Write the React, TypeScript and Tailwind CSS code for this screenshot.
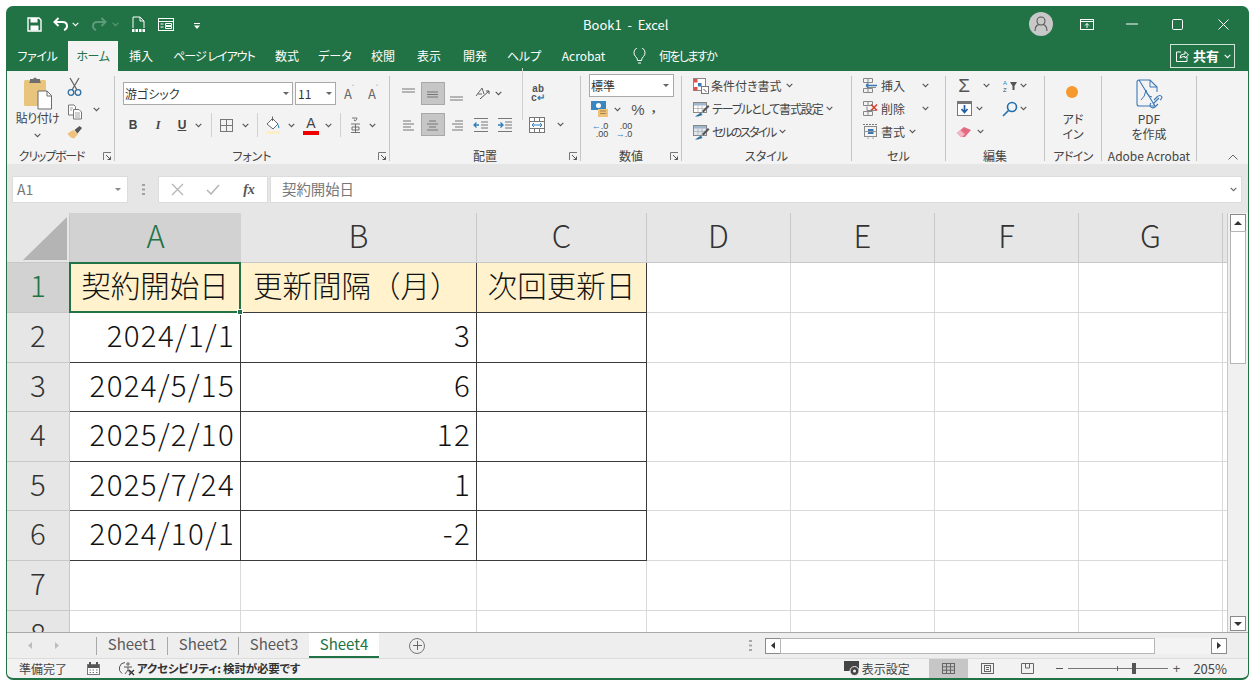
import React from "react";

function Chev({ className = "", color = "#555" }: { className?: string; color?: string }) {
  return (
    <svg width="7" height="5" viewBox="0 0 7 5" className={"shrink-0 " + className}>
      <path d="M0.7 0.8 L3.5 3.6 L6.3 0.8" fill="none" stroke={color} strokeWidth="1.1" />
    </svg>
  );
}

function Launcher({ className = "" }: { className?: string }) {
  return (
    <svg width="9" height="9" viewBox="0 0 9 9" className={"shrink-0 " + className}>
      <path d="M0.5 8V0.5H8" fill="none" stroke="#777" />
      <path d="M3 3L7.5 7.5M7.5 4.5V7.5H4.5" fill="none" stroke="#555" />
    </svg>
  );
}

function Group({ w, label, launcher, children, labelClass = "" }: { w: number; label: string; launcher?: boolean; children: React.ReactNode; labelClass?: string }) {
  return (
    <div className="flex shrink-0 h-full" style={{ width: w }}>
      <div className="flex-1 min-w-0 flex flex-col">
        <div className="h-[76px] shrink-0">{children}</div>
        <div className={"relative h-[14px] mt-[2px] flex items-center justify-center text-[12px] text-[#444] leading-none whitespace-nowrap " + labelClass}>
          {label}
          {launcher && <Launcher className="absolute right-[2px] top-[3px]" />}
        </div>
      </div>
      <div className="w-px bg-[#c4c4c4] mt-[5px] h-[85px] shrink-0" />
    </div>
  );
}

function Lines({ kind }: { kind: string }) {
  const map: Record<string, number[][]> = {
    vtop: [[1, 3, 14], [1, 6, 14]],
    vmid: [[2, 6, 13], [2, 8.5, 13], [2, 11, 13]],
    vbot: [[1, 11, 14], [1, 14, 14]],
    left: [[2, 4, 10], [2, 7, 13], [2, 10, 10], [2, 13, 13]],
    center: [[4, 4, 11], [2, 7, 13], [4, 10, 11], [2, 13, 13]],
    right: [[6, 4, 14], [3, 7, 14], [6, 10, 14], [3, 13, 14]],
  };
  return (
    <svg width="16" height="16" viewBox="0 0 16 16">
      {map[kind].map((l, i) => (
        <path key={i} d={`M${l[0]} ${l[1]}H${l[2]}`} stroke="#777" strokeWidth="1" />
      ))}
    </svg>
  );
}

function Paste() {
  return (
    <svg width="30" height="34" viewBox="0 0 30 34">
      <rect x="1" y="3" width="22" height="26" rx="1.5" fill="#e8c47c" />
      <path d="M7 4V2H10Q12-1 14 2H17V4L18 6H6Z" fill="#6f6f6f" />
      <path d="M15 14H24L28.5 18.5V32H15Z" fill="#fff" stroke="#6b6b6b" />
      <path d="M24 14V19H28.5" fill="none" stroke="#6b6b6b" />
    </svg>
  );
}

function Scissors() {
  return (
    <svg width="16" height="20" viewBox="0 0 16 20" fill="none">
      <path d="M3 1L10 13M12 1L5 13" stroke="#666" strokeWidth="1.3" />
      <circle cx="4" cy="15.5" r="2.8" stroke="#2f6f9f" strokeWidth="1.3" />
      <circle cx="11" cy="15.5" r="2.8" stroke="#2f6f9f" strokeWidth="1.3" />
    </svg>
  );
}

function CopyIc() {
  return (
    <svg width="16" height="16" viewBox="0 0 16 16" fill="none">
      <path d="M1.5 1H7L8.5 2.5V11H1.5Z" fill="#fff" stroke="#777" />
      <path d="M6.5 5.5H12L14.5 8V15H6.5Z" fill="#fff" stroke="#777" />
      <path d="M8 9H13M8 11H13M8 13H13M3 4H6M3 6H5" stroke="#8a8a8a" strokeWidth=".8" />
    </svg>
  );
}

function Painter() {
  return (
    <svg width="16" height="15" viewBox="0 0 16 15">
      <path d="M0.5 8.5L6 5L11 9L7 13.5Q3 13 0.5 8.5Z" fill="#eec27a" />
      <path d="M7.5 5L12.5 1L15 3L10.5 8.5Z" fill="#555" />
    </svg>
  );
}

function Borders() {
  return (
    <svg width="15" height="15" viewBox="0 0 15 15" fill="none" stroke="#777">
      <rect x="1.5" y="1.5" width="12" height="12" />
      <path d="M7.5 1.5V13.5M1.5 7.5H13.5" />
    </svg>
  );
}

function Fill() {
  return (
    <svg width="16" height="20" viewBox="0 0 16 20">
      <path d="M2 9L7.5 3.5L13 9L8 14Z" fill="#fff" stroke="#666" />
      <path d="M7.5 1.5V6" stroke="#666" />
      <path d="M13 9Q15 12 14 13.5Q12.5 12 13 9Z" fill="#2f7fb8" />
      <rect x="1" y="16" width="14" height="3" fill="#fbeec8" />
    </svg>
  );
}

function Phonetic() {
  return (
    <svg width="13" height="18" viewBox="0 0 13 18" fill="none" stroke="#666" strokeWidth=".9">
      <path d="M3 2H8Q8 4 6 5M5.5 3.5V5M2 8H11M6.5 8V17M3 11H10V14H3ZM2 16.5H11" />
    </svg>
  );
}

function IconBtn({ children, w, className = "" }: { children: React.ReactNode; w: number; className?: string }) {
  return (
    <div className={"flex items-center justify-center shrink-0 h-full " + className} style={{ width: w }}>
      {children}
    </div>
  );
}

function VSep({ h = 24 }: { h?: number }) {
  return <div className="w-px bg-[#d0d0d0] shrink-0" style={{ height: h }} />;
}

function StyleIcon({ kind }: { kind: number }) {
  if (kind === 0)
    return (
      <svg width="16" height="16" viewBox="0 0 16 16">
        <rect x=".5" y=".5" width="12" height="12" fill="#fff" stroke="#888" />
        <rect x="1" y="1" width="3.5" height="3.5" fill="#d9534f" />
        <rect x="5" y="5" width="3.5" height="3.5" fill="#3a78b5" />
        <rect x="1" y="9" width="3.5" height="3.5" fill="#d9534f" />
        <rect x="8.5" y="8.5" width="7" height="7" fill="#fff" stroke="#777" />
        <path d="M10.5 11L13.5 14" stroke="#555" />
      </svg>
    );
  return (
    <svg width="17" height="16" viewBox="0 0 17 16">
      <rect x=".5" y="1.5" width="13" height="10" fill={kind === 1 ? "#fff" : "#dfe6ee"} stroke="#888" />
      <rect x="1" y="2" width="12" height="2.5" fill="#9fb6cf" />
      <path d="M1 7.5H13M5 4.5V11.5M9 4.5V11.5" stroke="#aaa" strokeWidth=".7" />
      <path d="M9 10L15 4L16.5 5.5L10.5 11.5Z" fill="#555" />
      <path d="M2 15.5L8 11.5L9.5 14L5 15.5Z" fill="#2f6f9f" />
    </svg>
  );
}

function CellIcon({ kind }: { kind: number }) {
  if (kind === 2)
    return (
      <svg width="17" height="17" viewBox="0 0 17 17" fill="none">
        <path d="M1 1.5H16" stroke="#777" strokeDasharray="2 1" />
        <rect x="2.5" y="3.5" width="12" height="10" stroke="#888" />
        <rect x="6" y="6" width="5.5" height="5" fill="#3a78b5" />
        <path d="M6 14.5V16M11 14.5V16M2.5 8.5H14.5" stroke="#999" />
      </svg>
    );
  return (
    <svg width="17" height="17" viewBox="0 0 17 17" fill="none" stroke="#888">
      <path d="M1.5 1.5H10.5V5.5H1.5ZM6 1.5V5.5M1.5 11.5H10.5V15.5H1.5ZM6 11.5V15.5" />
      <path d="M5 6.5V10.5H14" />
      {kind === 0 ? (
        <path d="M4 8.5H15M4 8.5L6.5 6.5M4 8.5L6.5 10.5" stroke="#3a78b5" strokeWidth="1.3" />
      ) : (
        <path d="M9 4.5L15 10.5M15 4.5L9 10.5" stroke="#d8412f" strokeWidth="1.6" />
      )}
    </svg>
  );
}

const styleRows: [string, string][] = [
  ["条件付き書式", "ml-[2px]"],
  ["テーブルとして書式設定", "ml-[2px] tracking-[-1.15px]"],
  ["セルのスタイル", "ml-[2px] tracking-[-2px]"],
];

function Ribbon() {
  return (
    <div className="h-[93px] bg-[#f3f3f3] flex shrink-0 text-[#444]">
      <Group w={108} label="クリップボード" launcher labelClass="pr-[18px] tracking-[-1.2px]">
        <div className="flex pl-[10px] pt-[6px]">
          <div className="w-[41px] flex flex-col items-center">
            <Paste />
            <div className="text-[12px] leading-none mt-[1px] tracking-[-0.5px] whitespace-nowrap">貼り付け</div>
            <Chev className="mt-[9px]" />
          </div>
          <div className="w-[25px] ml-[4px] flex flex-col items-center">
            <Scissors />
            <div className="h-[7px]" />
            <CopyIc />
            <div className="h-[5px]" />
            <Painter />
          </div>
          <Chev className="mt-[30px] ml-[6px]" />
        </div>
      </Group>

      <Group w={275} label="フォント" launcher>
        <div className="pl-[8px] pt-[11px]">
          <div className="flex items-center h-[23px]">
            <div className="w-[170px] h-full bg-white border border-[#a9a9a9] flex items-center justify-between pl-[1px] pr-[3px] text-[12px] text-[#333]">
              <span>游ゴシック</span>
              <svg width="6" height="3" viewBox="0 0 6 3"><path d="M0 0H6L3 3Z" fill="#666" /></svg>
            </div>
            <div className="w-[41px] h-full ml-[2px] bg-white border border-[#a9a9a9] flex items-center justify-between pl-[2px] pr-[3px] text-[12px] text-[#333]">
              <span>11</span>
              <svg width="6" height="3" viewBox="0 0 6 3"><path d="M0 0H6L3 3Z" fill="#666" /></svg>
            </div>
            <div className="w-[24px] ml-[1px] text-center text-[13px] text-[#666] flex justify-center items-start">A<span className="text-[7px] leading-none">˄</span></div>
            <div className="w-[24px] text-center text-[13px] text-[#666] flex justify-center items-start">A<span className="text-[7px] leading-none">˅</span></div>
          </div>
          <div className="flex items-center h-[24px] mt-[8px] text-[#444]">
            <IconBtn w={20}><span className="font-bold text-[12px] font-['Liberation_Sans']">B</span></IconBtn>
            <IconBtn w={30}><span className="italic font-bold text-[12px] font-['Liberation_Serif']">I</span></IconBtn>
            <IconBtn w={18}><span className="underline font-bold text-[12px] font-['Liberation_Sans']">U</span></IconBtn>
            <Chev className="ml-[4px] mr-[9px]" />
            <VSep />
            <IconBtn w={28}><Borders /></IconBtn>
            <Chev className="ml-[2px] mr-[8px]" />
            <VSep />
            <IconBtn w={30}><Fill /></IconBtn>
            <Chev className="mr-[6px]" />
            <div className="w-[20px] flex flex-col items-center">
              <span className="text-[14px] leading-[14px] font-['Liberation_Sans']">A</span>
              <span className="w-[16px] h-[4px] bg-[#e00] mt-[1px]" />
            </div>
            <Chev className="ml-[4px] mr-[8px]" />
            <VSep />
            <IconBtn w={28}><Phonetic /></IconBtn>
            <Chev />
          </div>
        </div>
      </Group>

      <Group w={191} label="配置" launcher>
        <div className="pl-[7px] pt-[11px]">
          <div className="flex items-center h-[23px]">
            <IconBtn w={24}><Lines kind="vtop" /></IconBtn>
            <IconBtn w={24} className="bg-[#c6c6c6] border border-[#a8a8a8]"><Lines kind="vmid" /></IconBtn>
            <IconBtn w={24}><Lines kind="vbot" /></IconBtn>
            <IconBtn w={26}>
              <svg width="17" height="15" viewBox="0 0 17 15" fill="none" stroke="#666">
                <path d="M2 10L8 2L10 8M3.5 8H8" />
                <path d="M6 13L15 5M12 5H15V8" stroke="#555" />
              </svg>
            </IconBtn>
            <Chev className="mr-[20px]" />
            <VSep h={52} />
            <IconBtn w={30}>
              <div className="font-['Liberation_Mono'] text-[10px] leading-[9px] font-bold text-[#555] text-center">ab<br />c<span className="text-[#2f7fb8]">↵</span></div>
            </IconBtn>
          </div>
          <div className="flex items-center h-[23px] mt-[8px]">
            <IconBtn w={24}><Lines kind="left" /></IconBtn>
            <IconBtn w={24} className="bg-[#c6c6c6] border border-[#a8a8a8]"><Lines kind="center" /></IconBtn>
            <IconBtn w={24}><Lines kind="right" /></IconBtn>
            <IconBtn w={24}>
              <svg width="16" height="14" viewBox="0 0 16 14" fill="none">
                <path d="M1 .5H15M8 4H15M8 7H15M8 10H15M1 13.5H15" stroke="#777" />
                <path d="M6 7H1M3.5 4.5L1 7L3.5 9.5" stroke="#2f7fb8" strokeWidth="1.3" />
              </svg>
            </IconBtn>
            <IconBtn w={24}>
              <svg width="16" height="14" viewBox="0 0 16 14" fill="none">
                <path d="M1 .5H15M8 4H15M8 7H15M8 10H15M1 13.5H15" stroke="#777" />
                <path d="M1 7H6M3.5 4.5L6 7L3.5 9.5" stroke="#2f7fb8" strokeWidth="1.3" />
              </svg>
            </IconBtn>
            <IconBtn w={32} className="ml-[4px]">
              <svg width="16" height="16" viewBox="0 0 16 16" fill="none" stroke="#777">
                <rect x=".5" y=".5" width="15" height="15" fill="#fff" />
                <path d="M.5 4.5H15.5M.5 11.5H15.5M5.5 .5V4.5M10.5 .5V4.5M5.5 11.5V15.5M10.5 11.5V15.5" />
                <path d="M3 8H13M5 6L3 8L5 10M11 6L13 8L11 10" stroke="#2f7fb8" />
              </svg>
            </IconBtn>
            <Chev className="ml-[4px]" />
          </div>
        </div>
      </Group>

      <Group w={101} label="数値" launcher>
        <div className="pl-[8px] pt-[3px]">
          <div className="w-[85px] h-[23px] bg-white border border-[#a9a9a9] flex items-center justify-between pl-[1px] pr-[4px] text-[12px] text-[#333]">
            <span>標準</span>
            <svg width="6" height="3" viewBox="0 0 6 3"><path d="M0 0H6L3 3Z" fill="#666" /></svg>
          </div>
          <div className="flex items-center h-[22px] mt-[1px] text-[#555]">
            <IconBtn w={22}>
              <svg width="18" height="16" viewBox="0 0 18 16">
                <rect x="0" y="0" width="15" height="9" fill="#3a86c0" />
                <circle cx="7.5" cy="4.5" r="2.5" fill="#fff" />
                <rect x="7" y="8" width="10" height="8" fill="#eec27a" />
                <path d="M9 10H15M9 12.5H15" stroke="#8a6a2a" strokeWidth=".7" />
              </svg>
            </IconBtn>
            <Chev className="ml-[3px]" />
            <span className="ml-[6px] w-[22px] text-center text-[15px] leading-none font-['Liberation_Sans']">%</span>
            <span className="ml-[3px] font-bold text-[14px] leading-none font-['Liberation_Serif'] -mt-[3px]">,</span>
          </div>
          <div className="flex items-center h-[22px] text-[#555] mt-[-1px]">
            <IconBtn w={22}>
              <div className="text-[9px] leading-[8px] font-['Liberation_Sans'] text-[#444] text-right"><span className="text-[#2f7fb8]">←</span>.0<br />.00</div>
            </IconBtn>
            <IconBtn w={24} className="ml-[1px]">
              <div className="text-[9px] leading-[8px] font-['Liberation_Sans'] text-[#444] text-right">.00<br /><span className="text-[#2f7fb8]">→</span>.0</div>
            </IconBtn>
          </div>
        </div>
      </Group>

      <Group w={170} label="スタイル">
        <div className="pl-[11px] pt-[3px] text-[12px] text-[#444]">
          {styleRows.map(([t, cls], i) => (
            <div key={t} className="flex items-center h-[23px] whitespace-nowrap">
              <StyleIcon kind={i} />
              <span className={cls}>{t}</span>
              <Chev className="ml-[4px]" />
            </div>
          ))}
        </div>
      </Group>

      <Group w={94} label="セル">
        <div className="pl-[10px] pt-[3px] text-[12px] text-[#444]">
          {["挿入", "削除", "書式"].map((t, i) => (
            <div key={t} className="flex items-center h-[23px] whitespace-nowrap">
              <CellIcon kind={i} />
              <span className="ml-[2px] text-[12px]">{t}</span>
              <Chev className={i === 2 ? "ml-[4px]" : "ml-[17px]"} />
            </div>
          ))}
        </div>
      </Group>

      <Group w={99} label="編集">
        <div className="pl-[10px] pt-[3px]">
          <div className="flex items-center h-[23px]">
            <IconBtn w={16}><span className="text-[19px] leading-none text-[#555] font-['Liberation_Sans']">Σ</span></IconBtn>
            <Chev className="ml-[11px]" />
            <IconBtn w={16} className="ml-[12px]">
              <svg width="15" height="14" viewBox="0 0 15 14">
                <text x="0" y="6" fontSize="6" fill="#2f7fb8" fontFamily="Liberation Sans">A</text>
                <text x="0" y="13" fontSize="6" fill="#555" fontFamily="Liberation Sans">Z</text>
                <path d="M7 3H14L11.5 7V11H9.5V7Z" fill="#555" />
              </svg>
            </IconBtn>
            <Chev className="ml-[2px]" />
          </div>
          <div className="flex items-center h-[23px]">
            <IconBtn w={16}>
              <svg width="15" height="15" viewBox="0 0 15 15">
                <rect x=".5" y=".5" width="14" height="14" fill="#fff" stroke="#777" />
                <rect x="1" y="1" width="13" height="2" fill="#777" />
                <path d="M7.5 4V11M4.5 8L7.5 11.5L10.5 8" fill="none" stroke="#1f5f9a" strokeWidth="1.7" />
              </svg>
            </IconBtn>
            <Chev className="ml-[4px]" />
            <IconBtn w={18} className="ml-[18px]">
              <svg width="16" height="16" viewBox="0 0 16 16" fill="none" stroke="#1f6fae" strokeWidth="1.6">
                <circle cx="10" cy="6" r="4.5" />
                <path d="M6.5 9.5L1 15" />
              </svg>
            </IconBtn>
            <Chev className="ml-[1px]" />
          </div>
          <div className="flex items-center h-[23px]">
            <IconBtn w={16}>
              <svg width="16" height="12" viewBox="0 0 16 12">
                <path d="M1 7L8 1L15 4L9 11H5Z" fill="#e36a82" />
                <path d="M1 7L4 4L9 8L6 11H5Z" fill="#f5b6c4" />
              </svg>
            </IconBtn>
            <Chev className="ml-[5px]" />
          </div>
        </div>
      </Group>

      <Group w={57} label="アドイン" labelClass="tracking-[-0.6px]">
        <div className="flex flex-col items-center text-[12px] leading-[15px] text-center pt-[15px]">
          <span className="w-[12px] h-[12px] rounded-full bg-[#f79a2e] mr-[2px]" />
          <div className="mt-[13px]">アド<br />イン</div>
        </div>
      </Group>

      <Group w={95} label="Adobe Acrobat" labelClass="text-[12.5px]">
        <div className="flex flex-col items-center text-[12px] leading-[15px] text-center pt-[8px]">
          <svg width="28" height="31" viewBox="0 0 28 31" fill="none">
            <path d="M4 1H15L22 8V13M20 27H4Q2 27 2 25V3Q2 1 4 1Z" stroke="#3a78b5" strokeWidth="1.1" />
            <path d="M15 1V8H22" stroke="#3a78b5" strokeWidth="1" />
            <path d="M6 21Q10 18 11 11Q12 17 17 18" stroke="#3a78b5" strokeWidth="1" />
            <path d="M18 25L24 19M19 21L22 18Q25 15 27 18Q27 20 25 21M23 25L20 28Q17 30 15 27Q15 25 16 24" stroke="#3a78b5" strokeWidth="1.1" />
          </svg>
          <div className="mt-[1px]">PDF<br />を作成</div>
        </div>
      </Group>

      <div className="flex-1 flex items-end justify-end pr-[10px] pb-[4px]">
        <svg width="10" height="6" viewBox="0 0 10 6"><path d="M.5 5.5L5 1L9.5 5.5" fill="none" stroke="#666" /></svg>
      </div>
    </div>
  );
}

function TitleBar() {
  return (
    <div className="h-[34px] flex items-center shrink-0 text-white relative">
      <div className="flex items-center pl-[20px] h-full">
        <svg width="15" height="15" viewBox="0 0 15 15" fill="none" className="mr-[11px]">
          <path d="M1 1H12L14 3V14H1Z" stroke="#fff" strokeWidth="1.4" />
          <rect x="3.5" y="1" width="7" height="4.5" fill="#fff" />
          <rect x="3.5" y="8.5" width="8" height="5" fill="#fff" />
        </svg>
        <svg width="16" height="14" viewBox="0 0 16 14" fill="none">
          <path d="M5.5 1L1.5 5L5.5 9" stroke="#fff" strokeWidth="2" />
          <path d="M2 5H9.5Q14 5 14 9Q14 12 11 13" stroke="#fff" strokeWidth="2" />
        </svg>
        <Chev color="#fff" className="ml-[3px]" />
        <svg width="16" height="14" viewBox="0 0 16 14" fill="none" className="ml-[12px]">
          <path d="M10.5 1L14.5 5L10.5 9" stroke="#5d9a7a" strokeWidth="2" />
          <path d="M14 5H6.5Q2 5 2 9Q2 12 5 13" stroke="#5d9a7a" strokeWidth="2" />
        </svg>
        <Chev color="#5d9a7a" className="ml-[5px]" />
        <svg width="15" height="17" viewBox="0 0 15 17" fill="none" className="ml-[12px]">
          <path d="M2 12V1H9L13 5V12" stroke="#fff" />
          <path d="M9 1V5H13" stroke="#fff" />
          <path d="M1 14.5H14" stroke="#fff" strokeWidth="3" strokeDasharray="2.5 1" />
        </svg>
        <svg width="16" height="13" viewBox="0 0 16 13" fill="none" stroke="#fff" className="ml-[12px]">
          <rect x=".5" y=".5" width="15" height="12" />
          <path d="M.5 3.5H15.5M2.5 6H5.5M2.5 9H5.5M7.5 5.5H13.5V7.5H7.5ZM7.5 8.5H13.5V10.5H7.5Z" />
        </svg>
        <svg width="6" height="7" viewBox="0 0 6 7" className="ml-[20px] mt-[2px]">
          <path d="M0 1H6V2H0ZM0 3.5H6L3 7Z" fill="#fff" />
        </svg>
      </div>
      <div className="absolute left-[576px] top-[10px] text-[13px] leading-[16px] whitespace-pre">Book1  -  Excel</div>
      <div className="ml-auto flex items-center h-full">
        <div className="w-[24px] h-[24px] rounded-full bg-[#c8c8c8] flex items-center justify-center mr-[27px]">
          <svg width="14" height="16" viewBox="0 0 14 16" fill="none" stroke="#555" strokeWidth="1.1">
            <circle cx="7" cy="5" r="4" />
            <path d="M1 15Q1 9.5 5 8.5M13 15Q13 9.5 9 8.5" />
          </svg>
        </div>
        <svg width="14" height="11" viewBox="0 0 14 11" fill="none" stroke="#fff" className="mr-[32px]">
          <rect x=".5" y=".5" width="13" height="10" />
          <path d="M.5 2.5H13.5M7 9V4.5M5 6.5L7 4.5L9 6.5" />
        </svg>
        <svg width="12" height="2" viewBox="0 0 12 2" className="mr-[34px]"><path d="M0 1H12" stroke="#fff" /></svg>
        <svg width="11" height="11" viewBox="0 0 11 11" fill="none" className="mr-[35px]"><rect x=".5" y=".5" width="10" height="10" rx="1.2" stroke="#fff" /></svg>
        <svg width="11" height="11" viewBox="0 0 11 11" className="mr-[19px]"><path d="M.5.5L10.5 10.5M10.5.5L.5 10.5" stroke="#fff" /></svg>
      </div>
    </div>
  );
}

function Tabs() {
  const tabs: [string, number, string][] = [
    ["ファイル", 61, "tracking-[-0.4px]"],
    ["ホーム", 50, "tracking-[-0.4px]"],
    ["挿入", 46, ""],
    ["ページ レイアウト", 100, "tracking-[-1px]"],
    ["数式", 46, ""],
    ["データ", 50, ""],
    ["校閲", 46, ""],
    ["表示", 46, ""],
    ["開発", 46, ""],
    ["ヘルプ", 52, ""],
    ["Acrobat", 67, ""],
  ];
  return (
    <div className="h-[30px] flex shrink-0 text-white text-[12px]">
      {tabs.map(([t, w, cls]) => (
        <div key={t} style={{ width: w }} className={"h-full flex items-center justify-center whitespace-nowrap shrink-0 " + cls + " " + (t === "ホーム" ? "bg-[#f3f3f3] text-[#217346]" : "")}>{t}</div>
      ))}
      <div className="flex items-center ml-[16px]">
        <svg width="13" height="17" viewBox="0 0 13 17" fill="none" stroke="#fff">
          <path d="M4.5 12.5Q4.5 10 2.5 8.5A5.5 5.5 0 1 1 10.5 8.5Q8.5 10 8.5 12.5Z" />
          <path d="M5 15H8" />
        </svg>
        <span className="ml-[13px] tracking-[-1.6px]">何をしますか</span>
      </div>
      <div className="ml-auto mr-[13px] mt-[3px] w-[65px] h-[24px] border border-[#cfe3d8] flex items-center pl-[5px] text-[13px]">
        <svg width="13" height="12" viewBox="0 0 13 12" fill="none" stroke="#fff" className="shrink-0">
          <path d="M5 2H.5V11.5H11V7" />
          <path d="M4 8Q4 4 8 4H9V1.5L12.5 5L9 8V6.5Q6 6.5 4 8Z" />
        </svg>
        <span className="font-bold ml-[4px]">共有</span>
        <Chev color="#fff" className="ml-[5px]" />
      </div>
    </div>
  );
}

function FormulaBar() {
  return (
    <div className="h-[49px] bg-[#e6e6e6] shrink-0 flex items-start pt-[12px] pl-[5px] pr-[6px] text-[#777]">
      <div className="w-[116px] h-[27px] bg-white border border-[#dcdcdc] flex items-center justify-between pl-[4px] pr-[6px] text-[14px]">
        <span>A1</span>
        <svg width="6" height="3" viewBox="0 0 6 3"><path d="M0 0H6L3 3Z" fill="#888" /></svg>
      </div>
      <div className="w-[30px] h-[27px] flex items-center justify-center">
        <svg width="3" height="11" viewBox="0 0 3 11" fill="#a0a0a0"><rect width="3" height="2" /><rect y="4.5" width="3" height="2" /><rect y="9" width="3" height="2" /></svg>
      </div>
      <div className="w-[110px] h-[27px] bg-white border border-[#dcdcdc] flex items-center">
        <IconBtn w={36}><svg width="13" height="13" viewBox="0 0 13 13"><path d="M1 1L12 12M12 1L1 12" stroke="#b5b5b5" strokeWidth="1.3" /></svg></IconBtn>
        <IconBtn w={36}><svg width="14" height="11" viewBox="0 0 14 11" fill="none"><path d="M1 6L5 10L13 1" stroke="#b5b5b5" strokeWidth="1.5" /></svg></IconBtn>
        <IconBtn w={36}><span className="italic font-bold text-[14px] text-[#555] font-['Liberation_Serif']">fx</span></IconBtn>
      </div>
      <div className="flex-1 ml-[2px] h-[27px] bg-white border border-[#dcdcdc] flex items-center justify-between pl-[11px] pr-[4px] text-[14.4px] text-[#777]">
        <span className="pb-[1px]">契約開始日</span>
        <Chev color="#666" />
      </div>
    </div>
  );
}

const rows: [string, string, string, string][] = [
  ["1", "契約開始日", "更新間隔（月）", "次回更新日"],
  ["2", "2024/1/1", "3", ""],
  ["3", "2024/5/15", "6", ""],
  ["4", "2025/2/10", "12", ""],
  ["5", "2025/7/24", "1", ""],
  ["6", "2024/10/1", "-2", ""],
  ["7", "", "", ""],
  ["8", "", "", ""],
];

const rowH = [50, 50, 49, 50, 49, 50, 50, 50];

function Sheet() {
  return (
    <div className="flex-1 min-h-0 flex overflow-hidden">
      <div className="w-[1220px] shrink-0 overflow-hidden grid grid-cols-[63px_171px_236px_170px_144px_144px_144px_144px_4px] content-start text-[29.5px] leading-none text-[#111] font-light [font-feature-settings:normal]">
        <div className="h-[50px] bg-[#e6e6e6] border-r border-b border-[#c8c8c8] flex items-end justify-end pr-[2px] pb-[2px]">
          <svg width="44" height="43" viewBox="0 0 44 43"><path d="M44 0V43H0Z" fill="#b4b4b4" /></svg>
        </div>
        <div className="h-[50px] bg-[#d2d2d2] border-b border-[#217346] flex items-center justify-center pb-[6px] text-[#217346] text-[31px]">A</div>
        {["B", "C", "D", "E", "F", "G"].map((c) => (
          <div key={c} className="h-[50px] bg-[#e6e6e6] border-r border-b border-[#c8c8c8] flex items-center justify-center pb-[6px] text-[#333] text-[31px]">{c}</div>
        ))}
        <div className="h-[50px] bg-[#e6e6e6] border-b border-[#c8c8c8]" />
        {rows.map((r, i) => {
          const h = rowH[i];
          const head = i === 0;
          const table = i < 6;
          const line = table ? "border-[#3a3a3a]" : "border-[#d9d9d9]";
          const bg = head ? "bg-[#fff2cc]" : "bg-white";
          const num = head ? "" : "tracking-[1.3px]";
          return (
            <React.Fragment key={r[0]}>
              <div style={{ height: h }} className={"border-r border-b border-[#c8c8c8] flex items-center justify-center pb-[5px] " + (head ? "bg-[#d2d2d2] text-[#217346]" : "bg-[#e6e6e6] text-[#333]")}>{r[0]}</div>
              <div style={{ height: h }} className={"relative flex items-center pb-[5px] px-[5px] border-r border-b " + line + " " + bg + (head ? " justify-center" : " justify-end")}>
                <span className={"whitespace-nowrap " + num}>{r[1]}</span>
                {head && (
                  <div className="absolute -inset-px border-2 border-[#217346] z-10">
                    <div className="absolute -right-[4px] -bottom-[4px] w-[6px] h-[6px] bg-[#217346] border border-white" />
                  </div>
                )}
              </div>
              <div style={{ height: h }} className={"flex items-center pb-[5px] px-[5px] border-r border-b whitespace-nowrap " + line + " " + bg + (head ? " justify-start pl-[12px]" : " justify-end " + num)}>{r[2]}</div>
              <div style={{ height: h }} className={"flex items-center justify-center pb-[5px] border-r border-b whitespace-nowrap " + line + " " + bg}>{r[3]}</div>
              {[0, 1, 2, 3].map((k) => (
                <div key={k} style={{ height: h }} className="bg-white border-r border-b border-[#d9d9d9]" />
              ))}
              <div style={{ height: h }} className="bg-white border-b border-[#d9d9d9]" />
            </React.Fragment>
          );
        })}
      </div>
      <div className="flex-1 bg-[#f0f0f0] flex flex-col items-center pt-[1px] border-l border-[#c8c8c8]">
        <div className="w-[16px] h-[18px] bg-white border border-[#8a8a8a] flex items-center justify-center">
          <svg width="8" height="4" viewBox="0 0 8 4"><path d="M0 4L4 0L8 4Z" fill="#333" /></svg>
        </div>
        <div className="w-[16px] h-[133px] bg-white border border-[#b5b5b5] -mt-px" />
        <div className="flex-1" />
        <div className="w-[16px] h-[15px] bg-white border border-[#8a8a8a] flex items-center justify-center mb-px">
          <svg width="8" height="4" viewBox="0 0 8 4"><path d="M0 0L8 0L4 4Z" fill="#333" /></svg>
        </div>
      </div>
    </div>
  );
}

function SheetTabs() {
  return (
    <div className="h-[26px] shrink-0 bg-[#eeeeee] border-t border-[#a8a8a8] flex items-center text-[15px] text-[#5a5a5a]">
      <svg width="4" height="7" viewBox="0 0 4 7" className="ml-[21px]"><path d="M4 0V7L0 3.5Z" fill="#bdbdbd" /></svg>
      <svg width="4" height="7" viewBox="0 0 4 7" className="ml-[23px]"><path d="M0 0V7L4 3.5L0 0Z" fill="#bdbdbd" /></svg>
      <div className="w-px h-[18px] bg-[#a8a8a8] ml-[37px]" />
      {["Sheet1", "Sheet2", "Sheet3"].map((s, i) => (
        <React.Fragment key={s}>
          <div className="w-[70px] text-center whitespace-nowrap pb-[2px]">{s}</div>
          {i < 2 && <div className="w-px h-[18px] bg-[#a8a8a8]" />}
        </React.Fragment>
      ))}
      <div className="w-[70px] h-[25px] bg-white border-b-2 border-[#217346] text-[#217346] flex items-center justify-center">Sheet4</div>
      <div className="ml-[30px] w-[16px] h-[16px] rounded-full border border-[#777] flex items-center justify-center">
        <svg width="9" height="9" viewBox="0 0 9 9"><path d="M4.5 0V9M0 4.5H9" stroke="#666" /></svg>
      </div>
      <svg width="3" height="11" viewBox="0 0 3 11" fill="#a8a8a8" className="ml-[324px]"><rect width="3" height="2" /><rect y="4.5" width="3" height="2" /><rect y="9" width="3" height="2" /></svg>
      <div className="ml-[13px] w-[16px] h-[16px] bg-white border border-[#8a8a8a] flex items-center justify-center">
        <svg width="4" height="7" viewBox="0 0 4 7"><path d="M4 0V7L0 3.5Z" fill="#333" /></svg>
      </div>
      <div className="w-[375px] h-[16px] bg-white border border-[#b5b5b5] -ml-px" />
      <div className="w-[56px] h-[16px] bg-[#f3f3f3]" />
      <div className="w-[16px] h-[16px] bg-white border border-[#8a8a8a] flex items-center justify-center">
        <svg width="4" height="7" viewBox="0 0 4 7"><path d="M0 0V7L4 3.5Z" fill="#333" /></svg>
      </div>
    </div>
  );
}

function StatusBar() {
  return (
    <div className="h-[20px] shrink-0 bg-[#f2f2f2] border-t border-[#dcdcdc] flex items-center text-[12px] text-[#444]">
      <span className="ml-[12px]">準備完了</span>
      <svg width="13" height="13" viewBox="0 0 13 13" className="ml-[20px]">
        <rect x=".5" y="2.5" width="12" height="10" fill="#fff" stroke="#777" />
        <rect x="1" y="3" width="11" height="3" fill="#555" />
        <rect x="2" y="0" width="2" height="3" fill="#555" /><rect x="9" y="0" width="2" height="3" fill="#555" />
        <path d="M2.5 8H4M5.5 8H7M9 8H10.5M2.5 10.5H4M5.5 10.5H7M9 10.5H10.5" stroke="#777" />
      </svg>
      <svg width="16" height="15" viewBox="0 0 16 15" fill="none" stroke="#555" className="ml-[19px]">
        <path d="M6 1.5A6 6 0 0 0 3 12.5" />
        <circle cx="9" cy="3" r="1.2" />
        <path d="M5 6H13M9 6V9L6 13M9 9L12 13" />
        <path d="M10 9L15 14M15 9L10 14" stroke="#333" strokeWidth="1.3" />
      </svg>
      <span className="ml-[2px] font-bold text-[11.5px] text-[#333] whitespace-nowrap tracking-[-0.2px]">アクセシビリティ: 検討が必要です</span>
      <div className="ml-auto flex items-center h-full">
        <svg width="17" height="15" viewBox="0 0 17 15" className="mr-[1px]">
          <rect x="0" y="0" width="15" height="10" fill="#444" />
          <circle cx="10.5" cy="10" r="4.5" fill="#444" stroke="#f2f2f2" />
          <circle cx="10.5" cy="10" r="1.5" fill="#f2f2f2" />
        </svg>
        <span className="whitespace-nowrap text-[12px]">表示設定</span>
        <div className="ml-[19px] w-[39px] h-full bg-[#c6c6c6] flex items-center justify-center">
          <svg width="13" height="11" viewBox="0 0 13 11" fill="none" stroke="#666"><rect x=".5" y=".5" width="12" height="10" /><path d="M4.5 .5V10.5M8.5 .5V10.5M.5 3.8H12.5M.5 7.2H12.5" /></svg>
        </div>
        <IconBtn w={40}><svg width="13" height="11" viewBox="0 0 13 11" fill="none" stroke="#666"><rect x=".5" y=".5" width="12" height="10" /><rect x="3.5" y="2.5" width="6" height="6" /><path d="M5 4.5H8M5 6.5H8" /></svg></IconBtn>
        <IconBtn w={39}><svg width="13" height="11" viewBox="0 0 13 11" fill="none" stroke="#666"><path d="M.5 .5H12.5V10.5H.5ZM4.5 .5V5H8.5V.5" /></svg></IconBtn>
        <span className="ml-[9px] w-[7px] h-px bg-[#555]" />
        <div className="w-[100px] h-[1px] bg-[#777] relative ml-[5px]">
          <span className="absolute left-[49px] -top-[2px] w-px h-[5px] bg-[#666]" />
          <span className="absolute left-[64px] -top-[5px] w-[4px] h-[11px] bg-[#555]" />
        </div>
        <span className="ml-[5px] text-[13px] leading-none font-['Liberation_Sans'] text-[#555]">+</span>
        <span className="ml-[13px] mr-[21px] text-[13px] text-[#444]">205%</span>
      </div>
    </div>
  );
}

export default function App() {
  return (
    <div className="w-[1255px] h-[687px] bg-white pt-[6px] pl-[6px] pr-[6px] pb-[7px] overflow-hidden font-['Noto_Sans_CJK_JP','Noto_Sans',sans-serif] [font-feature-settings:'palt']">
      <div className="w-full h-full rounded-[7px] overflow-hidden border border-[#217346] border-b-2 bg-[#217346] flex flex-col">
        <TitleBar />
        <Tabs />
        <Ribbon />
        <FormulaBar />
        <Sheet />
        <SheetTabs />
        <StatusBar />
      </div>
    </div>
  );
}
